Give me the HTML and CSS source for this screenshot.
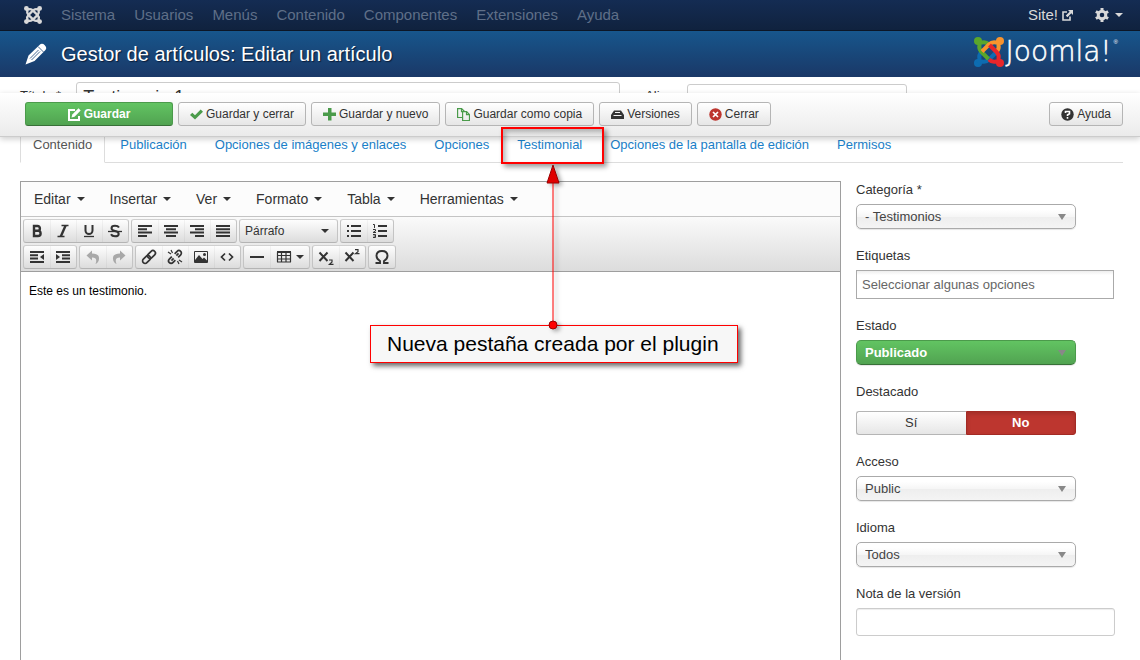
FILE: index.html
```html
<!DOCTYPE html>
<html lang="es">
<head>
<meta charset="utf-8">
<title>Gestor de artículos: Editar un artículo</title>
<link rel="stylesheet" href="styles.css">
</head>
<body>
<svg class="defs" aria-hidden="true">
  <defs>
    <g id="strand">
      <circle cx="4" cy="4" r="4"/>
      <path d="M4 4L5.500 8Q4.500 12 7.500 15L14.500 22M4 4L8 5.500Q12 4.500 15 7.500" fill="none" stroke="currentColor" stroke-width="4"/>
    </g>
  </defs>
  <symbol id="caret" viewBox="0 0 8 4"><path d="M0 0h8L4 4z"/></symbol>
</svg>

<nav class="navbar">
  <a class="brand" href="#" aria-label="Joomla">
    <svg width="18" height="18" viewBox="0 0 30 30"><use href="#strand"/><use href="#strand" transform="rotate(90 15 15)"/><use href="#strand" transform="rotate(180 15 15)"/><use href="#strand" transform="rotate(270 15 15)"/></svg>
  </a>
  <a href="#">Sistema</a><a href="#">Usuarios</a><a href="#">Menús</a><a href="#">Contenido</a><a href="#">Componentes</a><a href="#">Extensiones</a><a href="#">Ayuda</a>
  <a class="site" href="#">Site!
    <svg width="11" height="11" viewBox="0 0 11 11"><path d="M5 2H1v8h7V6.500" fill="none" stroke="currentColor" stroke-width="1.600"/><path d="M6 0h5v5L9.300 3.300 5.400 7.200 3.800 5.600 7.700 1.700z"/></svg>
  </a>
  <button class="gear" type="button" aria-label="Opciones de usuario">
    <svg width="14" height="14" viewBox="0 0 14 14"><circle cx="7" cy="7" r="3.800" fill="none" stroke="currentColor" stroke-width="3"/><path d="M7 0v2.500M7 11.500V14M.9 3.500l2.200 1.300M10.900 9.200l2.200 1.300M.9 10.500l2.200-1.300M10.900 4.800l2.200-1.300" stroke="currentColor" stroke-width="3"/></svg>
    <svg width="8" height="4"><use href="#caret"/></svg>
  </button>
</nav>

<header class="header">
  <svg class="pencil" width="22" height="22" viewBox="0 0 22 22"><path d="M.5 21.500L3.500 12.500 14.500 2Q17-.5 19.800 2.200T20 7.500L9.500 18z"/><path d="M13 3.500l5.500 5.500M5 15.500L13.500 7M6.500 17L15 8.500" stroke="#1a4477" stroke-width=".800"/></svg>
  <h1>Gestor de artículos: Editar un artículo</h1>
  <div class="logo">
    <svg width="30" height="30" viewBox="0 0 30 30">
      <g class="blue"><use href="#strand" transform="rotate(270 15 15)"/></g>
      <g class="lime"><use href="#strand"/></g>
      <g class="orange"><use href="#strand" transform="rotate(90 15 15)"/></g>
      <g class="red"><use href="#strand" transform="rotate(180 15 15)"/></g>
    </svg>
    <span>Joomla!</span><sup>®</sup>
  </div>
</header>

<div class="page">
  <div class="subhead">
    <button class="btn save" type="button"><svg width="13" height="13" viewBox="0 0 13 13"><path d="M7 2H1v10h10V8" fill="none" stroke="currentColor" stroke-width="2"/><path d="M3.500 9.500l.8-3L10.500.3l2.200 2.200-6.200 6.200z"/></svg>Guardar</button>
    <button class="btn" type="button"><svg class="ok" width="13" height="13" viewBox="0 0 13 13"><path d="M0 7l2.300-2.300L5 7.200 10.700 1.500 13 3.700 5 11.500z"/></svg>Guardar y cerrar</button>
    <button class="btn" type="button"><svg class="ok" width="13" height="13" viewBox="0 0 13 13"><path d="M5 0h3.500v4.500H13V8H8.500v4.500H5V8H0V4.500h5z"/></svg>Guardar y nuevo</button>
    <button class="btn" type="button"><svg class="ok" width="13" height="13" viewBox="0 0 13 13"><path d="M5 9.500H.6V.6h4L7.500 3.500M4.500.6v3H7M5.600 3.600h4l2.900 2.900v6H5.600zM9.500 3.600v3h3" fill="none" stroke="currentColor" stroke-width="1.200"/></svg>Guardar como copia</button>
    <button class="btn" type="button"><svg width="13" height="13" viewBox="0 0 13 13"><path d="M3 2.500h7L13 7v4H0V7z"/><path d="M4 4.500h5M2.500 7.500h8" fill="none" stroke="#f3f3f3"/></svg>Versiones</button>
    <button class="btn" type="button"><svg class="bad" width="13" height="13" viewBox="0 0 13 13"><circle cx="6.500" cy="6.500" r="6.200"/><path d="M4 4l5 5M9 4L4 9" stroke="#fff" stroke-width="1.700"/></svg>Cerrar</button>
    <button class="btn help" type="button"><svg width="13" height="13" viewBox="0 0 13 13"><circle cx="6.500" cy="6.500" r="6.200"/><path d="M4.500 5V3.500h4v2.300l-2 1.200v1M6.500 9v1.700" fill="none" stroke="#fff" stroke-width="1.600"/></svg>Ayuda</button>
  </div>

  <form class="content">
    <div class="title-row">
      <label for="title">Título *</label><input id="title" class="title-input" value="Testimonio 1">
      <label for="alias">Alias</label><input id="alias" class="alias-input" value="testimonio-1">
    </div>
    <ul class="tabs">
      <li><a class="active" href="#">Contenido</a></li><li><a href="#">Publicación</a></li><li><a href="#">Opciones de imágenes y enlaces</a></li><li><a href="#">Opciones</a></li><li><a href="#">Testimonial</a></li><li><a href="#">Opciones de la pantalla de edición</a></li><li><a href="#">Permisos</a></li>
    </ul>

    <div class="columns">
      <section class="editor">
        <div class="menubar">
          <button type="button">Editar<svg width="8" height="4"><use href="#caret"/></svg></button>
          <button type="button">Insertar<svg width="8" height="4"><use href="#caret"/></svg></button>
          <button type="button">Ver<svg width="8" height="4"><use href="#caret"/></svg></button>
          <button type="button">Formato<svg width="8" height="4"><use href="#caret"/></svg></button>
          <button type="button">Tabla<svg width="8" height="4"><use href="#caret"/></svg></button>
          <button type="button">Herramientas<svg width="8" height="4"><use href="#caret"/></svg></button>
        </div>
        <div class="tools">
          <div class="tool-row">
            <div class="group">
              <button type="button" aria-label="Negrita"><svg class="i" viewBox="0 0 16 16"><path d="M5 3h3.500a2.400 2.400 0 0 1 0 4.800H5zM5 7.800h4a2.500 2.500 0 0 1 0 5.200H5z" fill="none" stroke="currentColor" stroke-width="2.400"/></svg></button>
              <button type="button" aria-label="Cursiva"><svg class="i" viewBox="0 0 16 16"><path d="M6.500 2.500H13.500M2.500 13.500h7" stroke="currentColor" stroke-width="1.400"/><path d="M10.600 2.500L5.800 13.500" stroke="currentColor" stroke-width="2.400"/></svg></button>
              <button type="button" aria-label="Subrayado"><svg class="i" viewBox="0 0 16 16"><path d="M4.500 2v5.500a3.500 3.500 0 0 0 7 0V2" fill="none" stroke="currentColor" stroke-width="2"/><path d="M3 13.500h10" stroke="currentColor" stroke-width="1.300"/></svg></button>
              <button type="button" aria-label="Tachado"><svg class="i" viewBox="0 0 16 16"><path d="M12 4.500Q11 2.800 8 2.800 4.500 2.800 4.500 5.200 4.500 7.200 8 8 11.700 8.800 11.700 10.900 11.700 13.300 8 13.300 5 13.300 4 11.300" fill="none" stroke="currentColor" stroke-width="2"/><path d="M1 8.500h14" stroke="currentColor" stroke-width="1.300"/></svg></button>
            </div>
            <div class="group">
              <button type="button" aria-label="Alinear a la izquierda"><svg class="i" viewBox="0 0 16 16"><path d="M1 3h14M1 6.300h9M1 9.600h14M1 13h9" stroke="currentColor" stroke-width="2"/></svg></button>
              <button type="button" aria-label="Centrar"><svg class="i" viewBox="0 0 16 16"><path d="M1 3h14M3 6.300h10M1 9.600h14M3 13h10" stroke="currentColor" stroke-width="2"/></svg></button>
              <button type="button" aria-label="Alinear a la derecha"><svg class="i" viewBox="0 0 16 16"><path d="M1 3h14M6 6.300h9M1 9.600h14M6 13h9" stroke="currentColor" stroke-width="2"/></svg></button>
              <button type="button" aria-label="Justificar"><svg class="i" viewBox="0 0 16 16"><path d="M1 3h14M1 6.300h14M1 9.600h14M1 13h14" stroke="currentColor" stroke-width="2"/></svg></button>
            </div>
            <div class="group">
              <button class="format" type="button">Párrafo<svg width="8" height="4"><use href="#caret"/></svg></button>
            </div>
            <div class="group">
              <button type="button" aria-label="Lista"><svg class="i" viewBox="0 0 16 16"><path d="M5 3h10M5 8h10M5 13h10M1 3h2M1 8h2M1 13h2" stroke="currentColor" stroke-width="2"/></svg></button>
              <button type="button" aria-label="Lista numerada"><svg class="i" viewBox="0 0 16 16"><path d="M6 3h9M6 8h9M6 13h9" stroke="currentColor" stroke-width="2"/><path d="M1 1.500h1.500V5M1 6.500h2.500v1.500L1 9.500h3M1 11.500h2.500v3H1M1.500 13h2" fill="none" stroke="currentColor" stroke-width="1"/></svg></button>
            </div>
          </div>
          <div class="tool-row">
            <div class="group">
              <button type="button" aria-label="Reducir sangría"><svg class="i" viewBox="0 0 16 16"><path d="M1 3h14M1 6.300h8M1 9.600h8M1 13h14" stroke="currentColor" stroke-width="2"/><path d="M15 5v6l-4-3z"/></svg></button>
              <button type="button" aria-label="Aumentar sangría"><svg class="i" viewBox="0 0 16 16"><path d="M1 3h14M7 6.300h8M7 9.600h8M1 13h14" stroke="currentColor" stroke-width="2"/><path d="M1 5v6l4-3z"/></svg></button>
            </div>
            <div class="group">
              <button type="button" disabled aria-label="Deshacer"><svg class="i" viewBox="0 0 16 16"><path d="M1.500 6.500l5.500-5V4.500q7.500 0 7 5.500-.3 3.500-3.500 5 2.500-6.500-3.500-6.500v3z"/></svg></button>
              <button type="button" disabled aria-label="Rehacer"><svg class="i" viewBox="0 0 16 16"><path d="M14.500 6.500L9 1.500V4.500q-7.500 0-7 5.500 .3 3.500 3.500 5-2.500-6.500 3.500-6.500v3z"/></svg></button>
            </div>
            <div class="group">
              <button type="button" aria-label="Enlace"><svg class="i" viewBox="0 0 16 16"><g transform="rotate(-45 8 8)" fill="none" stroke="currentColor" stroke-width="1.700"><rect x="0" y="5.500" width="9" height="5" rx="2.500"/><rect x="7" y="5.500" width="9" height="5" rx="2.500"/></g></svg></button>
              <button type="button" aria-label="Quitar enlace"><svg class="i" viewBox="0 0 16 16"><g transform="rotate(-45 8 8)" fill="none" stroke="currentColor" stroke-width="1.700"><path d="M6 5.500H2.500a2.500 2.500 0 0 0 0 5H6M10 5.500h3.500a2.500 2.500 0 0 1 0 5H10M3 8h3M10 8h3"/></g><path d="M1 3l3 2M4 1l1.500 3M12 11l3 2M10.500 12l1.500 3" stroke="currentColor" stroke-width="1.200"/></svg></button>
              <button type="button" aria-label="Imagen"><svg class="i" viewBox="0 0 16 16"><path d="M1.500 2.500h13v11h-13z" fill="none" stroke="currentColor"/><path d="M2 13V11l4-5 3.500 4L11 8.500l3 3V13z"/><circle cx="11.500" cy="5.500" r="1.500"/></svg></button>
              <button type="button" aria-label="Código fuente"><svg class="i" viewBox="0 0 16 16"><path d="M6 4.500L2.500 8 6 11.500M10 4.500L13.500 8 10 11.500" fill="none" stroke="currentColor" stroke-width="1.700"/></svg></button>
            </div>
            <div class="group">
              <button type="button" aria-label="Línea horizontal"><svg class="i" viewBox="0 0 16 16"><path d="M1 8h14" stroke="currentColor" stroke-width="2"/></svg></button>
              <button class="wide" type="button" aria-label="Tabla"><svg class="i" viewBox="0 0 16 16"><path d="M1 2.500h14M1.500 3v10M14.500 3v10M1 13h14M1 6.500h14M1 10h14M5.500 3v10M10 3v10" fill="none" stroke="currentColor" stroke-width="1.200"/><path d="M1 2h14v2H1z"/></svg><svg width="8" height="4"><use href="#caret"/></svg></button>
            </div>
            <div class="group">
              <button type="button" aria-label="Subíndice"><svg class="i" viewBox="0 0 16 16"><path d="M1.500 3.500l8 8.500M9.500 3.500L1.500 12" stroke="currentColor" stroke-width="2"/><path d="M11 11H14v2L11.500 15.300h4" fill="none" stroke="currentColor" stroke-width="1.200"/></svg></button>
              <button type="button" aria-label="Superíndice"><svg class="i" viewBox="0 0 16 16"><path d="M1.500 3.500l8 8.500M9.500 3.500L1.500 12" stroke="currentColor" stroke-width="2"/><path d="M11 .6H14v2L11.500 4.600h4" fill="none" stroke="currentColor" stroke-width="1.200"/></svg></button>
            </div>
            <div class="group">
              <button type="button" aria-label="Carácter especial"><svg class="i" viewBox="0 0 16 16"><path d="M1.500 14H6V12Q2.500 10 2.500 6.800 2.500 2 8 2T13.500 6.800Q13.500 10 10 12v2h4.500" fill="none" stroke="currentColor" stroke-width="1.900"/></svg></button>
            </div>
          </div>
        </div>
        <div class="document" contenteditable="true">Este es un testimonio.</div>
      </section>

      <aside class="side">
        <div class="field"><label for="cat">Categoría *</label><select id="cat"><option>- Testimonios</option></select></div>
        <div class="field"><label for="tags">Etiquetas</label><input id="tags" class="tags" placeholder="Seleccionar algunas opciones"></div>
        <div class="field"><label for="state">Estado</label><select id="state" class="published"><option>Publicado</option></select></div>
        <fieldset class="field">
          <legend>Destacado</legend>
          <div class="switch">
            <input type="radio" name="featured" id="yes"><label for="yes">Sí</label>
            <input type="radio" name="featured" id="no" checked><label for="no">No</label>
          </div>
        </fieldset>
        <div class="field"><label for="access">Acceso</label><select id="access"><option>Public</option></select></div>
        <div class="field"><label for="lang">Idioma</label><select id="lang"><option>Todos</option></select></div>
        <div class="field"><label for="note">Nota de la versión</label><input id="note" class="note"></div>
      </aside>
    </div>
  </form>
</div>

<div class="mark"></div>
<svg class="arrow" width="24" height="170" viewBox="0 0 24 170"><path d="M12 15V162" stroke="#f00"/><path d="M12 1l6 18H6z" fill="#e00000" stroke="#900"/><circle cx="12" cy="161" r="4" fill="#f00" stroke="#900"/></svg>
<div class="callout">Nueva pestaña creada por el plugin</div>
</body>
</html>
```

FILE: styles.css
```css
* { box-sizing: border-box; }

body {
  margin: 0;
  min-height: 100vh;
  display: flex;
  flex-direction: column;
  position: relative;
  background: #fff;
  color: #333;
  font: 13px/18px "Liberation Sans", Arial, sans-serif;
}

a { color: #1a7fc9; text-decoration: none; }
button, input, select { font: inherit; color: inherit; margin: 0; }
svg { fill: currentColor; flex: none; }
.defs { position: absolute; width: 0; height: 0; }

/* Top bar */
.navbar {
  display: flex;
  align-items: center;
  gap: 19px;
  height: 31px;
  padding: 0 17px 0 24px;
  background: linear-gradient(#142c53, #10223e);
  border-bottom: 1px solid #0c1626;
  font-size: 15px;
}
.navbar a { color: #5f6f88; }
.navbar .brand { display: flex; color: #d9d9d9; }
.navbar .site {
  display: flex;
  align-items: center;
  gap: 4px;
  margin-left: auto;
  margin-right: 3px;
  color: #d9d9d9;
}
.gear {
  display: flex;
  align-items: center;
  gap: 6px;
  padding: 0;
  border: 0;
  background: none;
  color: #d9d9d9;
}

/* Title bar */
.header {
  display: flex;
  align-items: center;
  height: 46px;
  padding: 0 22px 0 25px;
  background: linear-gradient(#17568c, #1a3867);
  color: #fff;
}
.header h1 {
  margin: 0 0 0 14px;
  font-size: 20px;
  line-height: 24px;
  font-weight: normal;
  text-shadow: 1px 1px 1px #0a1c38;
}
.logo {
  display: flex;
  align-items: center;
  gap: 2px;
  margin-left: auto;
  padding-bottom: 5px;
}
.logo span {
  font: 200 28px/30px "DejaVu Sans", sans-serif;
  -webkit-text-stroke: 0.5px #fff;
}
.logo sup { align-self: flex-start; font-size: 6px; line-height: 10px; }
.lime { color: #5aa62b; }
.orange { color: #f9942d; }
.red { color: #e8262a; }
.blue { color: #0d6cb1; }

/* Action buttons, floating over the form */
.page { position: relative; flex: 1; display: flex; flex-direction: column; }
.subhead {
  position: absolute;
  top: 16px;
  left: 0;
  right: 0;
  z-index: 1;
  display: flex;
  gap: 5px;
  padding: 9px 17px 10px 25px;
  background: linear-gradient(#fff, #ebebeb);
  border-bottom: 1px solid #ccc;
  box-shadow: 0 2px 6px #0003;
}
.btn {
  display: flex;
  align-items: center;
  justify-content: center;
  gap: 3px;
  height: 24px;
  padding: 0 11px;
  border: 1px solid #b5b5b5;
  border-radius: 3px;
  background: linear-gradient(#fff, #e6e6e6);
  font-size: 12px;
}
.btn.save {
  width: 148px;
  border-color: #4b9a4b #4b9a4b #387038;
  background: linear-gradient(#62c462, #51a351);
  color: #fff;
  font-weight: bold;
}
.btn.help { margin-left: auto; }
.ok { color: #4a9b4a; }
.bad { color: #bd362f; }

/* Form */
.content {
  flex: 1;
  display: flex;
  flex-direction: column;
  padding: 0 17px 0 20px;
}
.title-row { display: flex; align-items: flex-start; height: 50px; padding-top: 5px; }
.title-row label { padding-top: 5px; }
.title-row input {
  height: 30px;
  border: 1px solid #ccc;
  border-radius: 3px;
  padding: 0 6px;
}
.title-row .title-input {
  width: 544px;
  margin: 0 25px 0 15px;
  font-size: 18px;
}
.title-row .alias-input { width: 220px; height: 28px; margin: 2px 0 0 14px; padding: 0 8px; }

.tabs {
  display: flex;
  gap: 2px;
  margin: 0;
  padding: 0;
  list-style: none;
  border-bottom: 1px solid #ddd;
}
.tabs a {
  display: block;
  margin-bottom: -1px;
  padding: 8px 12px;
  border: 1px solid transparent;
  white-space: nowrap;
}
.tabs .active { border-color: #ddd #ddd #fff; background: #fff; color: #555; }

.columns {
  flex: 1;
  display: grid;
  grid-template-columns: minmax(0, 1fr) 267px;
  gap: 15px;
  padding-top: 18px;
}

/* Editor */
.editor {
  display: flex;
  flex-direction: column;
  border: 1px solid #9e9e9e;
  border-bottom: 0;
}
.menubar {
  display: flex;
  gap: 1px;
  padding: 0 1px;
  background: #fcfcfc;
  border-bottom: 1px solid #c4c4c4;
}
.menubar button {
  display: flex;
  align-items: center;
  gap: 6px;
  padding: 8px 12px;
  border: 0;
  background: none;
  font-size: 14px;
}
.tools {
  display: grid;
  gap: 2px;
  padding: 2px;
  background: linear-gradient(#fafafa, #dcdcdc);
  border-bottom: 1px solid #9e9e9e;
}
.tool-row { display: flex; gap: 2px; }
.group {
  display: flex;
  height: 24px;
  border: 1px solid #c0c0c0;
  border-color: #d0d0d0 #c4c4c4 #b4b4b4;
  border-radius: 3px;
  background: linear-gradient(#fdfdfd, #dcdcdc);
}
.group button {
  display: flex;
  align-items: center;
  justify-content: center;
  width: 26px;
  padding: 0;
  border: 0;
  background: none;
}
.group button + button { box-shadow: inset 1px 0 #0000000a; }
.group button:disabled { color: #a8a8a8; }
.group .wide { width: 39px; gap: 4px; }
.group .format {
  width: 97px;
  padding: 0 8px 0 5px;
  justify-content: space-between;
  font-size: 12px;
}
.i { width: 16px; height: 16px; }
.document {
  flex: 1;
  padding: 10px 8px;
  color: #000;
  font-size: 12px;
}

/* Sidebar */
.side { display: flex; flex-direction: column; align-items: flex-start; gap: 18px; }
.field {
  display: flex;
  flex-direction: column;
  gap: 5px;
  margin: 0;
  padding: 0;
  border: 0;
}
.field legend { padding: 0; margin-bottom: 10px; }
.side select {
  appearance: none;
  width: 220px;
  height: 25px;
  padding: 0 8px;
  border: 1px solid #aaa;
  border-radius: 5px;
  color: #444;
  background:
    url("data:image/svg+xml,%3Csvg xmlns='http://www.w3.org/2000/svg' width='8' height='6'%3E%3Cpath d='M0 0h8L4 6z' fill='%23888'/%3E%3C/svg%3E") no-repeat right 9px center,
    linear-gradient(#fff 20%, #f6f6f6 50%, #eee 52%, #f4f4f4);
  box-shadow: 0 1px 1px #0000001a;
}
.side .published {
  border-color: #4b9a4b #4b9a4b #387038;
  color: #fff;
  font-weight: bold;
  background:
    url("data:image/svg+xml,%3Csvg xmlns='http://www.w3.org/2000/svg' width='8' height='6'%3E%3Cpath d='M0 0h8L4 6z' fill='%23888'/%3E%3C/svg%3E") no-repeat right 9px center,
    linear-gradient(#62c462, #51a351);
}
.tags {
  width: 258px;
  height: 29px;
  padding: 0 5px;
  border: 1px solid #aaa;
  background: linear-gradient(#eee, #fff 15%);
}
.tags::placeholder { color: #666; opacity: 1; }
.note {
  width: 259px;
  height: 28px;
  border: 1px solid #ccc;
  border-radius: 3px;
  box-shadow: inset 0 1px 1px #00000013;
}
.switch { display: flex; width: 220px; }
.switch input { position: absolute; opacity: 0; }
.switch label {
  flex: 1;
  height: 24px;
  line-height: 22px;
  text-align: center;
  border: 1px solid #b5b5b5;
  border-right: 0;
  border-radius: 3px 0 0 3px;
  background: linear-gradient(#fff, #e6e6e6);
}
.switch label + input + label { border-radius: 0 3px 3px 0; }
.switch input:checked + label {
  border: 1px solid #a32a24;
  background: #bd362f;
  box-shadow: inset 0 2px 4px #00000026;
  color: #fff;
  font-weight: bold;
}

/* Annotation over the page */
.mark {
  position: absolute;
  z-index: 2;
  left: 501px;
  top: 127px;
  width: 103px;
  height: 37px;
  border: 2px solid #f00;
  box-shadow: 3px 3px 5px #0006, inset 3px 3px 5px #0004;
}
.arrow {
  position: absolute;
  z-index: 4;
  left: 541px;
  top: 164px;
  filter: drop-shadow(3px 2px 2px #0005);
}
.callout {
  position: absolute;
  z-index: 3;
  left: 370px;
  top: 325px;
  width: 368px;
  padding: 5px 16px 6px;
  border: 1px solid #f00;
  background: #f7f7f7;
  box-shadow: 3px 3px 5px #0009;
  color: #000;
  font-size: 21px;
  line-height: 25px;
  white-space: nowrap;
}
```
